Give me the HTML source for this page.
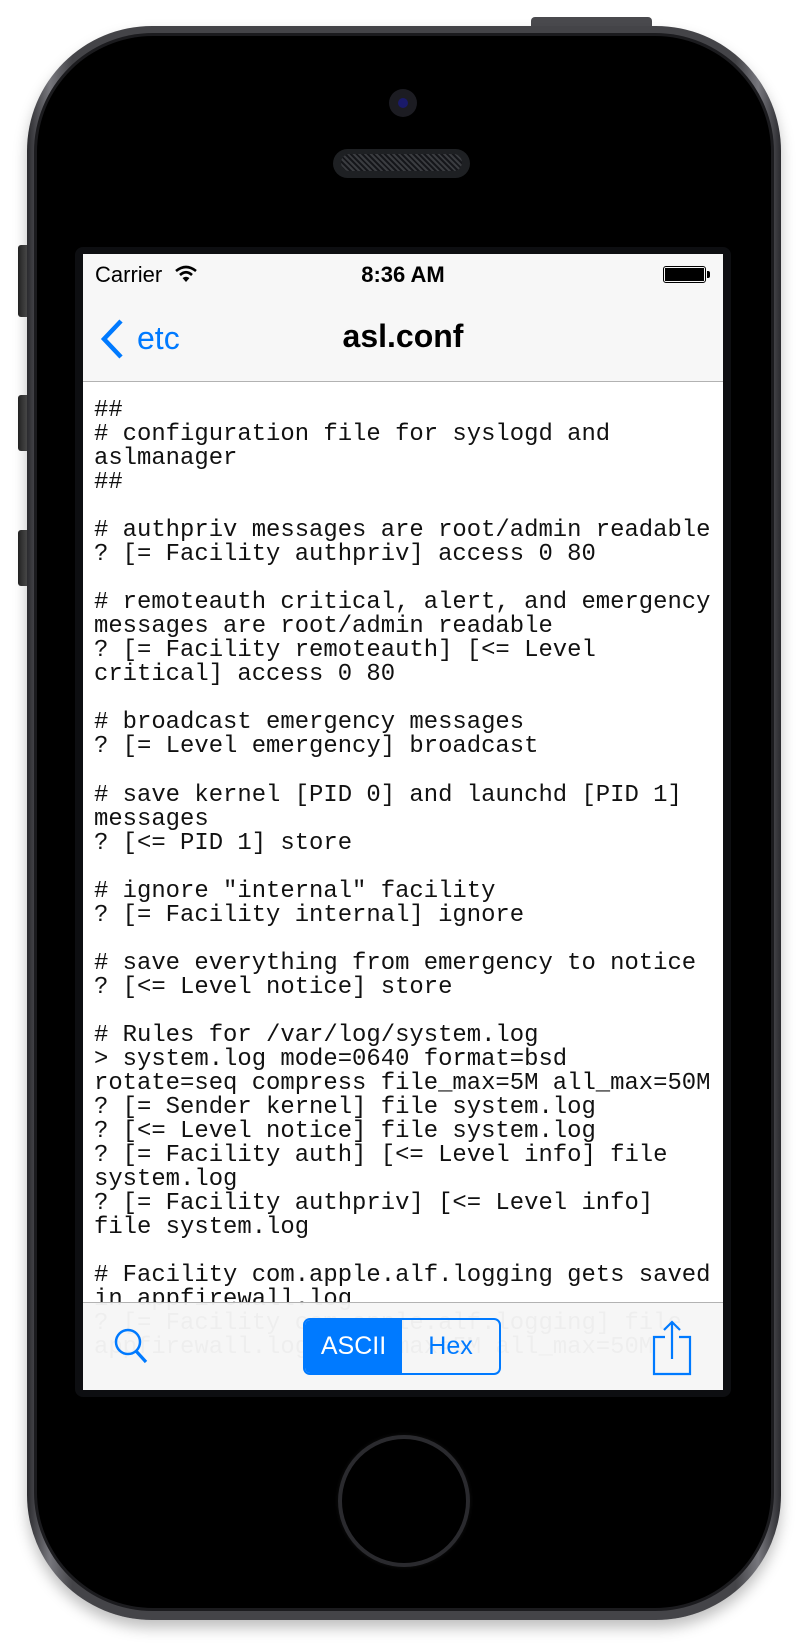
<!DOCTYPE html>
<html><head><meta charset="utf-8"><style>
*{margin:0;padding:0;box-sizing:border-box}
body{width:805px;height:1650px;background:#fff;position:relative;overflow:hidden;font-family:"Liberation Sans",sans-serif}
.abs{position:absolute}
.body{left:27px;top:26px;width:754px;height:1594px;border-radius:125px;background:linear-gradient(90deg,#2a2a2e,#77777d 3%,#444448 6%,#444448 94%,#77777d 97%,#2a2a2e);box-shadow:0 8px 14px rgba(0,0,0,.25)}
.face{left:37px;top:36px;width:734px;height:1572px;border-radius:116px;background:#000;box-shadow:0 0 0 3px #1b1b1e}
.btn{background:linear-gradient(90deg,#222,#555);border-radius:3px 0 0 3px;width:10px;left:18px}
.bezel{left:75px;top:247px;width:656px;height:1150px;background:#0d0e11;border-radius:8px}
.screen{left:83px;top:254px;width:640px;height:1136px;background:#fff;overflow:hidden}
.status{left:0;top:0;width:640px;height:128px;background:#f7f7f7;border-bottom:1px solid #b2b2b2}
pre{position:absolute;left:11px;top:145px;font-family:"Liberation Mono",monospace;font-size:23.9px;line-height:24.03px;color:#111;white-space:pre}
.tool{left:0;top:1048px;width:640px;height:88px;background:rgba(246,246,246,.97);border-top:1px solid #b2b2b2}
</style></head><body>
<div class="abs" style="left:531px;top:17px;width:121px;height:12px;background:#4a4a4e;border-radius:4px 4px 0 0"></div>
<div class="abs btn" style="top:245px;height:72px"></div>
<div class="abs btn" style="top:395px;height:56px"></div>
<div class="abs btn" style="top:530px;height:56px"></div>
<div class="abs body"></div>
<div class="abs face"></div>
<div class="abs" style="left:389px;top:89px;width:28px;height:28px;border-radius:50%;background:#1c1c22"></div>
<div class="abs" style="left:398px;top:98px;width:10px;height:10px;border-radius:50%;background:#1a1a6a"></div>
<div class="abs" style="left:333px;top:149px;width:137px;height:29px;border-radius:15px;background:#1e2023"></div>
<div class="abs" style="left:341px;top:154px;width:121px;height:17px;border-radius:9px;background:repeating-linear-gradient(45deg,#3a3c40 0 2px,#15161a 2px 4px)"></div>
<div class="abs" style="left:338px;top:1435px;width:132px;height:132px;border-radius:50%;border:4px solid #2a2a2e;box-shadow:0 0 4px #111"></div>
<div class="abs bezel"></div>
<div class="abs screen">
<pre>##
# configuration file for syslogd and
aslmanager
##

# authpriv messages are root/admin readable
? [= Facility authpriv] access 0 80

# remoteauth critical, alert, and emergency
messages are root/admin readable
? [= Facility remoteauth] [&lt;= Level
critical] access 0 80

# broadcast emergency messages
? [= Level emergency] broadcast

# save kernel [PID 0] and launchd [PID 1]
messages
? [&lt;= PID 1] store

# ignore "internal" facility
? [= Facility internal] ignore

# save everything from emergency to notice
? [&lt;= Level notice] store

# Rules for /var/log/system.log
&gt; system.log mode=0640 format=bsd
rotate=seq compress file_max=5M all_max=50M
? [= Sender kernel] file system.log
? [&lt;= Level notice] file system.log
? [= Facility auth] [&lt;= Level info] file
system.log
? [= Facility authpriv] [&lt;= Level info]
file system.log

# Facility com.apple.alf.logging gets saved
in appfirewall.log
? [= Facility com.apple.alf.logging] file
appfirewall.log file_max=5M all_max=50M</pre>
<div class="abs status">
<div class="abs" style="left:12px;top:8px;font-size:22px;color:#000">Carrier</div>
<svg class="abs" style="left:92px;top:11px" width="22" height="18" viewBox="0 0 22 18"><path d="M1 6 Q11 -2 21 6" stroke="#000" stroke-width="2.6" fill="none"/><path d="M5 10 Q11 4.5 17 10" stroke="#000" stroke-width="2.6" fill="none"/><path d="M7.5 13 L11 17 L14.5 13 Q11 10.5 7.5 13Z" fill="#000"/></svg>
<div class="abs" style="left:0;width:640px;text-align:center;top:8px;font-size:22px;font-weight:bold;color:#000">8:36 AM</div>
<div class="abs" style="left:580px;top:12px;width:43px;height:17px;border:1.5px solid #000;border-radius:3px;padding:1px"><div style="width:100%;height:100%;background:#000"></div></div>
<div class="abs" style="left:624px;top:17px;width:3px;height:7px;background:#000;border-radius:0 2px 2px 0"></div>
<svg class="abs" style="left:16px;top:65px" width="26" height="40" viewBox="0 0 26 40"><path d="M22 2 L5 20 L22 38" stroke="#007aff" stroke-width="4.5" fill="none"/></svg>
<div class="abs" style="left:54px;top:66px;font-size:32px;color:#007aff">etc</div>
<div class="abs" style="left:0;width:640px;text-align:center;top:64px;font-size:32px;font-weight:bold;color:#000">asl.conf</div>
</div>
<div class="abs tool">
<svg class="abs" style="left:30px;top:24px" width="38" height="38" viewBox="0 0 38 38"><circle cx="15" cy="15" r="12" stroke="#007aff" stroke-width="2.5" fill="none"/><path d="M23 24 L33 35" stroke="#007aff" stroke-width="3.2"/></svg>
<div class="abs" style="left:220px;top:15px;width:198px;height:57px;border:2px solid #007aff;border-radius:7px;overflow:hidden;display:flex">
<div style="width:97px;background:#007aff;color:#fff;font-size:25px;text-align:center;line-height:53px">ASCII</div>
<div style="flex:1;color:#007aff;font-size:25px;text-align:center;line-height:53px">Hex</div></div>
<svg class="abs" style="left:568px;top:16px" width="44" height="60" viewBox="0 0 44 60"><path d="M14 18 H3 V55 H39 V18 H28" stroke="#007aff" stroke-width="2.2" fill="none"/><path d="M21 3 V40 M13 11 L21 3 L29 11" stroke="#007aff" stroke-width="2.2" fill="none"/></svg>
</div>
</div>
</body></html>
